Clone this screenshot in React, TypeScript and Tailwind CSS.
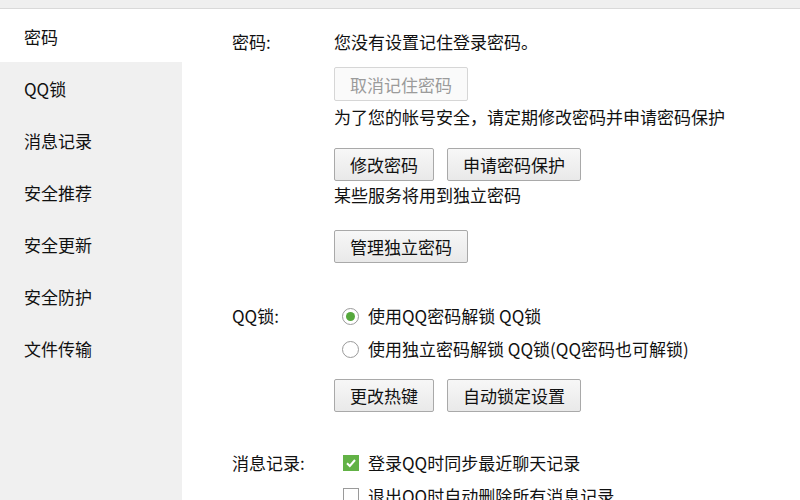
import React from "react";

const navItems = ["密码", "QQ锁", "消息记录", "安全推荐", "安全更新", "安全防护", "文件传输"];

function Btn({ children, disabled, className = "" }: { children: React.ReactNode; disabled?: boolean; className?: string }) {
  const base = "h-[33px] px-[15px] rounded-[2px] border leading-none flex items-center justify-center";
  const look = disabled
    ? "border-[#d6d6d6] bg-[#fafafa] text-[#9b9b9b]"
    : "border-[#a9a9a9] bg-gradient-to-b from-[#f7f7f7] to-[#e9e9e9] text-[#111]";
  return <button className={`${base} ${look} ${className}`}>{children}</button>;
}

function Radio({ checked, label }: { checked?: boolean; label: string }) {
  return (
    <label className="flex items-center h-[24px]">
      <span className="ml-[8px] w-[17px] h-[17px] rounded-full border border-[#9a9a9a] bg-white flex items-center justify-center">
        {checked && <span className="w-[9px] h-[9px] rounded-full bg-[#55a83c]" />}
      </span>
      <span className="ml-[9px]">{label}</span>
    </label>
  );
}

function Check({ checked, label }: { checked?: boolean; label: string }) {
  return (
    <label className="flex items-center h-[24px]">
      <span
        className={`ml-[9px] w-[16px] h-[16px] flex items-center justify-center ${
          checked ? "bg-[#62b246]" : "border border-[#9a9a9a] bg-white"
        }`}
      >
        {checked && (
          <svg width="12" height="12" viewBox="0 0 12 12">
            <path d="M2 6.2 L4.8 9 L10 3" fill="none" stroke="#fff" strokeWidth="2" />
          </svg>
        )}
      </span>
      <span className="ml-[9px]">{label}</span>
    </label>
  );
}

export default function App() {
  return (
    <div
      className="w-[800px] h-[500px] overflow-hidden bg-white text-[#111] text-[17px]"
      style={{ fontFamily: '"Microsoft YaHei", "Noto Sans CJK SC", "Liberation Sans", sans-serif' }}
    >
      <div className="h-[9px] bg-[#efefef] border-b border-[#d9d9d9]" />
      <div className="flex h-[491px]">
        {/* sidebar */}
        <aside className="w-[182px] flex flex-col">
          <div className="h-[53px] bg-white pl-[24px] pt-[2px] flex items-center">{navItems[0]}</div>
          <div className="flex-1 bg-[#f0f0f0] pt-[1px]">
            {navItems.slice(1).map((n) => (
              <div key={n} className="h-[52px] pl-[24px] flex items-center">
                {n}
              </div>
            ))}
          </div>
        </aside>

        {/* content */}
        <main className="flex-1 pl-[50px] pt-[21px] leading-[24px]">
          <div className="flex">
            <div className="w-[102px]">密码:</div>
            <div className="flex flex-col items-start">
              <div>您没有设置记住登录密码。</div>
              <Btn disabled className="mt-[13px] h-[34px]">取消记住密码</Btn>
              <div className="mt-[4px]">为了您的帐号安全，请定期修改密码并申请密码保护</div>
              <div className="mt-[19px] flex gap-[13px]">
                <Btn>修改密码</Btn>
                <Btn>申请密码保护</Btn>
              </div>
              <div className="mt-[2px]">某些服务将用到独立密码</div>
              <Btn className="mt-[23px]">管理独立密码</Btn>
            </div>
          </div>

          <div className="flex mt-[41px]">
            <div className="w-[102px]">QQ锁:</div>
            <div className="flex flex-col items-start">
              <Radio checked label="使用QQ密码解锁 QQ锁" />
              <div className="mt-[9px]">
                <Radio label="使用独立密码解锁 QQ锁(QQ密码也可解锁)" />
              </div>
              <div className="mt-[18px] flex gap-[13px]">
                <Btn>更改热键</Btn>
                <Btn>自动锁定设置</Btn>
              </div>
            </div>
          </div>

          <div className="flex mt-[39px]">
            <div className="w-[102px]">消息记录:</div>
            <div className="flex flex-col items-start">
              <Check checked label="登录QQ时同步最近聊天记录" />
              <div className="mt-[9px]">
                <Check label="退出QQ时自动删除所有消息记录" />
              </div>
            </div>
          </div>
        </main>
      </div>
    </div>
  );
}
